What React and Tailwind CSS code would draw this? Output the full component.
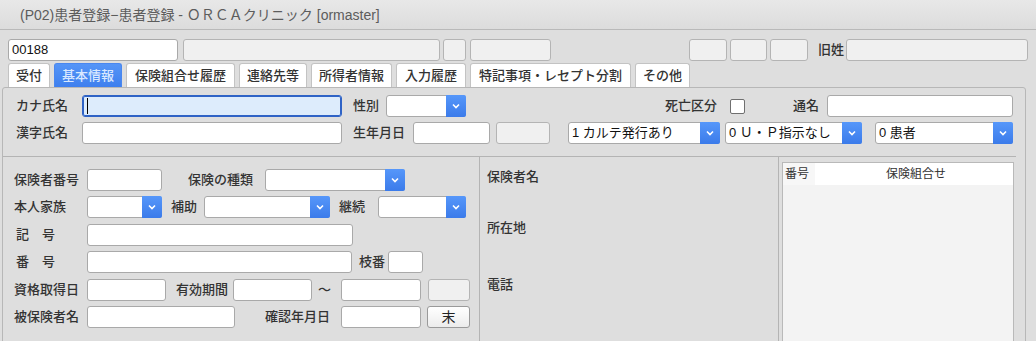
import React from 'react'

const FONT = { fontFamily: '"Liberation Sans", "Noto Sans CJK JP", sans-serif' }

const Input = ({ w, disabled = false, value = '', focus = false }) => (
  <div
    className={`h-[22px] shrink-0 rounded-[3px] border text-[13px] leading-[20px] px-[3px] text-[#111] ${
      focus
        ? 'border-[#2f63c6] bg-[#ddecfc] shadow-[inset_0_0_0_1px_#2f63c6]'
        : disabled
          ? 'border-[#b4b4b4] bg-[#f0f0f0]'
          : 'border-[#a9a9a9] bg-white'
    } ${w}`}
  >
    {focus ? <div className="ml-[1px] mt-[2px] h-[16px] w-[1px] bg-black" /> : value}
  </div>
)

const Select = ({ w, value = '' }) => (
  <div className={`flex h-[22px] shrink-0 rounded-[3px] border border-[#a9a9a9] bg-white ${w}`}>
    <div className="flex-1 px-[3px] text-[13px] leading-[20px] text-[#111] truncate">{value}</div>
    <div className="flex w-[20px] items-center justify-center rounded-r-[2px] bg-gradient-to-b from-[#5697fa] to-[#3b7bea] -my-[1px] -mr-[1px]">
      <svg width="8" height="6" viewBox="0 0 8 6">
        <path d="M1 1.5 L4 4.5 L7 1.5" fill="none" stroke="white" strokeWidth="1.6" />
      </svg>
    </div>
  </div>
)

const Label = ({ w, children, className = '' }) => (
  <div className={`shrink-0 text-[13px] font-medium leading-[22px] text-[#333] whitespace-nowrap ${w} ${className}`}>
    {children}
  </div>
)

const tabs = [
  ['受付', 'w-[42px]'],
  ['基本情報', 'w-[68px]'],
  ['保険組合せ履歴', 'w-[109px]'],
  ['連絡先等', 'w-[68px]'],
  ['所得者情報', 'w-[81px]'],
  ['入力履歴', 'w-[70px]'],
  ['特記事項・レセプト分割', 'w-[161px]'],
  ['その他', 'w-[55px]'],
]

export default function App() {
  return (
    <div className="w-[1036px] h-[341px] overflow-hidden bg-[#dedede]" style={FONT}>
      {/* タイトルバー */}
      <div className="h-[30px] border-b border-[#b9b9b9] bg-gradient-to-b from-[#e8e8e8] to-[#dcdcdc] pl-[20px] text-[14px] leading-[30px] text-[#5c5c5c]">
        (P02)患者登録−患者登録 - ＯＲＣＡクリニック [ormaster]
      </div>

      {/* 上段 */}
      <div className="flex items-center pl-[8px] pt-[9px]">
        <Input w="w-[170px]" value="00188" />
        <div className="ml-[5px]"><Input w="w-[257px]" disabled /></div>
        <div className="ml-[3px]"><Input w="w-[23px]" disabled /></div>
        <div className="ml-[4px]"><Input w="w-[81px]" disabled /></div>
        <div className="ml-[138px]"><Input w="w-[38px]" disabled /></div>
        <div className="ml-[3px]"><Input w="w-[37px]" disabled /></div>
        <div className="ml-[3px]"><Input w="w-[38px]" disabled /></div>
        <Label w="w-[28px]" className="ml-[10px]">旧姓</Label>
        <Input w="w-[182px]" disabled />
      </div>

      {/* タブ */}
      <div className="flex gap-[4px] pl-[8px] pt-[2px]">
        {tabs.map(([t, w], i) => (
          <div
            key={t}
            className={`h-[24px] ${w} rounded-t-[3px] border border-b-0 text-center text-[13px] leading-[23px] font-medium ${
              i === 1
                ? 'border-[#4a87ef] bg-gradient-to-b from-[#5595f7] to-[#3e7fee] text-[#d9e8ff]'
                : 'border-[#c3c3c3] bg-white text-[#333]'
            }`}
          >
            {t}
          </div>
        ))}
      </div>

      {/* メインパネル */}
      <div className="ml-[2px] w-[1024px] h-[300px] rounded-[3px] border border-[#b7b7b7] bg-[#dedede]">
        <div className="pt-[7px]">
          <div className="flex items-center pl-[13px]">
            <Label w="w-[66px]">カナ氏名</Label>
            <Input w="w-[260px]" focus />
            <Label w="w-[33px]" className="ml-[11px]">性別</Label>
            <Select w="w-[80px]" />
            <Label w="w-[65px]" className="ml-[199px]">死亡区分</Label>
            <div className="h-[15px] w-[15px] rounded-[2px] border border-[#6f6f6f] bg-white" />
            <Label w="w-[34px]" className="ml-[48px]">通名</Label>
            <Input w="w-[186px]" />
          </div>
          <div className="mt-[5px] flex items-center pl-[13px]">
            <Label w="w-[66px]">漢字氏名</Label>
            <Input w="w-[260px]" />
            <Label w="w-[60px]" className="ml-[11px]">生年月日</Label>
            <Input w="w-[77px]" />
            <div className="ml-[6px]"><Input w="w-[54px]" disabled /></div>
            <div className="ml-[18px]"><Select w="w-[152px]" value="1 カルテ発行あり" /></div>
            <div className="ml-[5px]"><Select w="w-[137px]" value="0 Ｕ・Ｐ指示なし" /></div>
            <div className="ml-[13px]"><Select w="w-[138px]" value="0 患者" /></div>
          </div>
        </div>

        {/* 下段 */}
        <div className="mt-[12px] flex w-[1013px] h-[200px] border-t border-[#b4b4b4]">
          <div className="w-[477px] shrink-0 border-r border-[#b4b4b4] pl-[11px] pt-[12px]">
            <div className="flex items-center">
              <Label w="w-[73px]">保険者番号</Label>
              <Input w="w-[75px]" />
              <Label w="w-[77px]" className="ml-[26px]">保険の種類</Label>
              <Select w="w-[140px]" />
            </div>
            <div className="mt-[5px] flex items-center">
              <Label w="w-[73px]">本人家族</Label>
              <Select w="w-[75px]" />
              <Label w="w-[33px]" className="ml-[9px]">補助</Label>
              <Select w="w-[126px]" />
              <Label w="w-[39px]" className="ml-[9px]">継続</Label>
              <Select w="w-[88px]" />
            </div>
            <div className="mt-[6px] flex items-center">
              <Label w="w-[73px]" className="pl-[2px]">記　号</Label>
              <Input w="w-[266px]" />
            </div>
            <div className="mt-[5px] flex items-center">
              <Label w="w-[73px]" className="pl-[2px]">番　号</Label>
              <Input w="w-[265px]" />
              <Label w="w-[29px]" className="ml-[7px]">枝番</Label>
              <Input w="w-[35px]" />
            </div>
            <div className="mt-[6px] flex items-center">
              <Label w="w-[73px]">資格取得日</Label>
              <Input w="w-[79px]" />
              <Label w="w-[57px]" className="ml-[10px]">有効期間</Label>
              <Input w="w-[79px]" />
              <Label w="w-[23px]" className="ml-[6px]">〜</Label>
              <Input w="w-[80px]" />
              <div className="ml-[7px]"><Input w="w-[42px]" disabled /></div>
            </div>
            <div className="mt-[5px] flex items-center">
              <Label w="w-[73px]">被保険者名</Label>
              <Input w="w-[148px]" />
              <Label w="w-[76px]" className="ml-[30px]">確認年月日</Label>
              <Input w="w-[80px]" />
              <div className="ml-[6px] h-[22px] w-[43px] rounded-[3px] border border-[#9a9a9a] bg-gradient-to-b from-white to-[#ececec] text-center text-[14px] leading-[20px] text-[#222]">
                末
              </div>
            </div>
          </div>

          <div className="w-[299px] shrink-0 border-r border-[#b4b4b4] pl-[7px] pt-[9px]">
            <Label w="w-[80px]">保険者名</Label>
            <Label w="w-[80px]" className="mt-[29px]">所在地</Label>
            <Label w="w-[80px]" className="mt-[35px]">電話</Label>
          </div>

          <div className="flex-1 pl-[3px] pt-[5px]">
            <div className="h-[190px] w-[232px] border border-[#b9b9b9] bg-[#f3f3f3]">
              <div className="flex h-[22px] bg-white text-[12px] leading-[22px] text-[#333]">
                <div className="w-[32px] pl-[2px] bg-[#f7f7f7]">番号</div>
                <div className="flex-1 text-center pl-[4px]">保険組合せ</div>
              </div>
            </div>
          </div>
        </div>
      </div>
    </div>
  )
}
